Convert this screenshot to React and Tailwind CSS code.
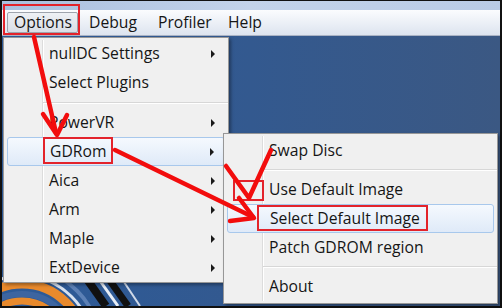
import React from 'react';

const font = "font-['Open_Sans','Noto_Sans',sans-serif]";

function Arrow() {
  return <span className="h-0 w-0 border-y-[4px] border-l-[4px] border-y-transparent border-l-[#1a1a1a]" />;
}

function Item({ label, sub, active }) {
  return (
    <div
      className={
        'relative mx-[3px] flex h-[29px] items-center justify-between rounded-[3px] pl-[42px] pr-[10px] ' +
        (active
          ? 'border border-[#a8c8ec] bg-gradient-to-b from-[#f5f9fe] to-[#dfeaf8] pl-[41px]'
          : '')
      }
    >
      <span>{label}</span>
      {sub && <Arrow />}
    </div>
  );
}

function Sep() {
  return (
    <div className="relative ml-[39px] flex h-[11px] flex-col justify-center">
      <div className="h-px bg-[#d7d7d7]" />
      <div className="h-px bg-white" />
    </div>
  );
}

function Wallpaper() {
  return (
    <svg className="absolute bottom-0 left-0" width="140" height="30" viewBox="0 0 140 30">
      <circle cx="20" cy="70" r="62" fill="none" stroke="#e98a2c" strokeWidth="9" />
      <circle cx="20" cy="70" r="52" fill="none" stroke="#3d65a0" strokeWidth="6" />
      <circle cx="20" cy="70" r="45" fill="none" stroke="#e98a2c" strokeWidth="7" />
      <circle cx="20" cy="70" r="70" fill="none" stroke="#d8e2ef" strokeWidth="3" />
      <circle cx="20" cy="70" r="78" fill="none" stroke="#5c80b5" strokeWidth="4" />
      <path d="M84 2 L104 30" stroke="#111" strokeWidth="8" />
      <path d="M96 2 L116 30" stroke="#e8eef6" strokeWidth="3" />
      <path d="M106 2 L126 30" stroke="#111" strokeWidth="7" />
      <path d="M118 0 L138 30" stroke="#cfd9e8" strokeWidth="2" />
    </svg>
  );
}

export default function App() {
  const bar = [
    { t: 'Options', w: 'w-[71px]' },
    { t: 'Debug', w: 'w-[69px]' },
    { t: 'Profiler', w: 'w-[70px]' },
    { t: 'Help', w: 'w-[60px]' },
  ];
  return (
    <div className={`relative h-[308px] w-[502px] overflow-hidden bg-[#111] px-[2px] pb-[2px] pt-px text-[15.7px] text-[#151515] ${font}`}>
      <div className="flex h-full flex-col">
        <div className="h-[9px] bg-gradient-to-r from-[#a9bfdf] via-[#c3d3ea] to-[#b9cbe6]" />
        <div className="flex h-[26px] items-center border-b border-[#aab3c4] bg-gradient-to-b from-[#fbfcfe] to-[#dde4ef] pl-[5px]">
          {bar.map((b, i) => (
            <div
              key={b.t}
              className={
                `${b.w} flex h-[21px] items-center pl-[6px] ` +
                (i === 0 ? 'rounded-[2px] border border-[#9ea4ad] bg-gradient-to-b from-[#eef1f5] to-[#d9dee6] pl-[5px]' : '') +
                (i === 1 ? ' ml-[5px]' : '')
              }
            >
              {b.t}
            </div>
          ))}
        </div>
        <div className="relative flex-1 bg-gradient-to-r from-[#2c5a98] via-[#33598f] to-[#3b5883]">
          <Wallpaper />
        </div>
      </div>

      {/* Options dropdown */}
      <div className="absolute left-[3px] top-[37px] h-[246px] w-[226px] border border-[#979797] bg-[#f0f0f0] pt-px shadow-[2px_2px_3px_rgba(0,0,0,0.35)]">
        <div className="absolute bottom-[2px] left-[38px] top-[2px] w-[2px] border-l border-[#dcdcdc] bg-white" />
        <Item label="nullDC Settings" sub />
        <Item label="Select Plugins" />
        <Sep />
        <Item label="PowerVR" sub />
        <Item label="GDRom" sub active />
        <Item label="Aica" sub />
        <Item label="Arm" sub />
        <Item label="Maple" sub />
        <Item label="ExtDevice" sub />
      </div>

      {/* GDRom submenu */}
      <div className="absolute left-[223px] top-[133px] h-[171px] w-[275px] border border-[#979797] bg-[#f0f0f0] pt-[2px] shadow-[2px_2px_3px_rgba(0,0,0,0.35)]">
        <div className="absolute bottom-[2px] left-[38px] top-[2px] w-[2px] border-l border-[#dcdcdc] bg-white" />
        <Item label="Swap Disc" />
        <div className="relative ml-[39px] flex h-[10px] flex-col justify-center">
          <div className="h-px bg-[#d7d7d7]" />
          <div className="h-px bg-white" />
        </div>
        <Item label="Use Default Image" />
        <Item label="Select Default Image" active />
        <Item label="Patch GDROM region" />
        <div className="relative ml-[39px] flex h-[10px] flex-col justify-center">
          <div className="h-px bg-[#d7d7d7]" />
          <div className="h-px bg-white" />
        </div>
        <Item label="About" />
      </div>

      {/* red annotations */}
      <svg className="pointer-events-none absolute inset-0" width="502" height="308" viewBox="0 0 502 308">
        <g fill="none" stroke="#e3232b" strokeWidth="2">
          <rect x="4" y="5" width="75" height="29" />
          <rect x="44" y="138" width="68" height="25" />
          <rect x="234" y="181" width="29" height="19" />
          <rect x="258" y="206" width="169" height="24" />
        </g>
        <g fill="none" stroke="#f20d0d" strokeWidth="4.5" strokeLinecap="round" strokeLinejoin="round">
          <path d="M34 37 L56 133" />
          <path d="M43 114 L57 135 L67 115" />
          <path d="M115 150 L253 217" />
          <path d="M239 198 L254 218 L230 221" />
          <path d="M226 166 L249 198 L271 150" />
        </g>
      </svg>
    </div>
  );
}
